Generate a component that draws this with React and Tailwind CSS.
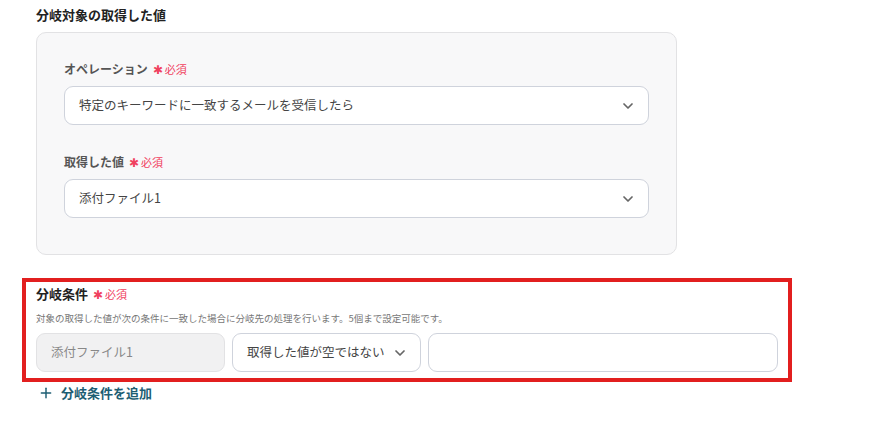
import { ChevronDown, Plus } from 'lucide-react'

function Required() {
  return (
    <span className="ml-[5px] inline-flex items-center gap-[2px] text-[11px] font-normal text-[#f0405e]">
      <span className="text-[12px] leading-none">✱</span>
      必須
    </span>
  )
}

function SelectBox({ value }) {
  return (
    <div className="flex h-[39px] items-center justify-between rounded-[9px] border border-[#cfd3dc] bg-white pl-[14px] pr-[12px] text-[12.5px] text-[#444]">
      <span>{value}</span>
      <ChevronDown size={16} strokeWidth={2.6} className="text-[#666]" />
    </div>
  )
}

function Field({ label, value }) {
  return (
    <div>
      <div className="mb-[7px] flex items-center text-[12px] leading-[20px] font-semibold text-[#555]">
        {label}
        <Required />
      </div>
      <SelectBox value={value} />
    </div>
  )
}

export default function App() {
  return (
    <div className="h-[424px] w-[877px] bg-white pl-[22px] font-['Noto_Sans_CJK_JP','Noto_Sans',sans-serif]">
      <h2 className="ml-[14px] pt-[5px] text-[13px] leading-[20px] font-bold text-[#222]">分岐対象の取得した値</h2>

      {/* 分岐対象 panel */}
      <div className="mt-[7px] ml-[14px] flex w-[641px] flex-col gap-[27px] rounded-[10px] border border-[#e2e2e4] bg-[#f8f8f9] pt-[26px] pr-[27px] pb-[36px] pl-[27px]">
        <Field label="オペレーション" value="特定のキーワードに一致するメールを受信したら" />
        <Field label="取得した値" value="添付ファイル1" />
      </div>

      {/* 分岐条件 */}
      <div className="mt-[23px] w-[770px] border-4 border-[#e21f1f] pt-[2px] pr-[10px] pb-[6px] pl-[10px]">
        <div className="flex items-center text-[13px] leading-[20px] font-bold text-[#222]">
          分岐条件
          <Required />
        </div>
        <p className="mt-[7px] text-[9.5px] leading-[14px] text-[#777]">
          対象の取得した値が次の条件に一致した場合に分岐先の処理を行います。5個まで設定可能です。
        </p>
        <div className="mt-[8px] flex gap-[7px]">
          <div className="flex h-[39px] w-[189px] items-center rounded-[9px] border border-[#e2e2e4] bg-[#f1f1f2] pl-[14px] text-[12.5px] text-[#888]">
            添付ファイル1
          </div>
          <div className="flex h-[39px] w-[189px] items-center justify-between rounded-[9px] border border-[#cfd3dc] bg-white pr-[12px] pl-[14px] text-[12.5px] text-[#444]">
            <span>取得した値が空ではない</span>
            <ChevronDown size={16} strokeWidth={2.6} className="text-[#666]" />
          </div>
          <div className="h-[39px] flex-1 rounded-[9px] border border-[#cfd3dc] bg-white"></div>
        </div>
      </div>

      <button className="mt-[1px] ml-[16px] flex items-center gap-[7px] text-[13px] leading-[20px] font-bold text-[#1d5e73]">
        <Plus size={16} strokeWidth={2.2} />
        分岐条件を追加
      </button>
    </div>
  )
}
